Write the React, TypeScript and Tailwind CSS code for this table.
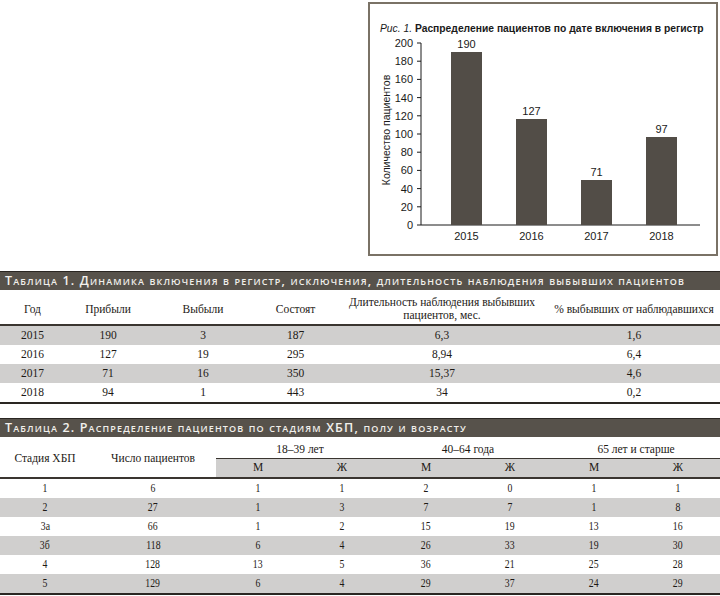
const bars = [
  { year: "2015", label: "190", x: 451, top: 52 },
  { year: "2016", label: "127", x: 516, top: 119 },
  { year: "2017", label: "71", x: 581, top: 180 },
  { year: "2018", label: "97", x: 646, top: 137 },
];

const ticks = [0, 20, 40, 60, 80, 100, 120, 140, 160, 180, 200];

const table1 = [
  ["2015", "190", "3", "187", "6,3", "1,6"],
  ["2016", "127", "19", "295", "8,94", "6,4"],
  ["2017", "71", "16", "350", "15,37", "4,6"],
  ["2018", "94", "1", "443", "34", "0,2"],
];

const table2 = [
  ["1", "6", "1", "1", "2", "0", "1", "1"],
  ["2", "27", "1", "3", "7", "7", "1", "8"],
  ["3а", "66", "1", "2", "15", "19", "13", "16"],
  ["3б", "118", "6", "4", "26", "33", "19", "30"],
  ["4", "128", "13", "5", "36", "21", "25", "28"],
  ["5", "129", "6", "4", "29", "37", "24", "29"],
];

const t1Widths = ["w-[65px]", "w-[86px]", "w-[104px]", "w-[81px]", "w-[212px]", "w-[172px]"];
const t2Widths = ["w-[90px]", "w-[126px]", "w-[84px]", "w-[84px]", "w-[84px]", "w-[84px]", "w-[84px]", "w-[84px]"];

function Chart() {
  const axisY = 225;
  return (
    <div className="ml-[368px] mt-[2px] h-[254px] w-[350px] border-2 border-[#7a7266]">
      <svg width="346" height="250" viewBox="370 4 346 250" className="block">
        <text x="380" y="32" fontSize="10.3" fill="#1a1a1a" fontFamily="'Liberation Sans', Arial, sans-serif">
          <tspan fontStyle="italic">Рис. 1.</tspan>
          <tspan fontWeight="bold"> Распределение пациентов по дате включения в регистр</tspan>
        </text>
        <text
          x="0"
          y="0"
          transform="translate(390 130) rotate(-90)"
          textAnchor="middle"
          fontSize="10.5"
          fill="#1a1a1a"
          fontFamily="'Liberation Sans', Arial, sans-serif"
        >
          Количество пациентов
        </text>
        <line x1="421" y1="43" x2="421" y2={axisY} stroke="#1a1a1a" strokeWidth="1" />
        <line x1="421" y1={axisY} x2="700" y2={axisY} stroke="#1a1a1a" strokeWidth="1" />
        {ticks.map((t) => {
          const y = axisY - t * 0.91;
          return (
            <g key={t}>
              <line x1="417" y1={y} x2="421" y2={y} stroke="#1a1a1a" strokeWidth="1" />
              <text
                x="413"
                y={y + 4}
                textAnchor="end"
                fontSize="11"
                fill="#1a1a1a"
                fontFamily="'Liberation Sans', Arial, sans-serif"
              >
                {t}
              </text>
            </g>
          );
        })}
        {bars.map((b) => (
          <g key={b.year}>
            <rect x={b.x} y={b.top} width="31" height={axisY - b.top} fill="#524d47" />
            <text
              x={b.x + 15.5}
              y={b.top - 4}
              textAnchor="middle"
              fontSize="11"
              fill="#1a1a1a"
              fontFamily="'Liberation Sans', Arial, sans-serif"
            >
              {b.label}
            </text>
            <text
              x={b.x + 15.5}
              y="240"
              textAnchor="middle"
              fontSize="11"
              fill="#1a1a1a"
              fontFamily="'Liberation Sans', Arial, sans-serif"
            >
              {b.year}
            </text>
          </g>
        ))}
      </svg>
    </div>
  );
}

function TitleBar({ children }: { children: string }) {
  return (
    <div className="border-t border-[#2a2622]">
      <div className="flex h-[18px] items-center bg-[#57524b] pl-[5px] font-['Open_Sans',sans-serif] text-[12.5px] font-semibold tracking-[1.15px] whitespace-nowrap text-[#f2f0ec] [font-variant:small-caps]">
        {children}
      </div>
    </div>
  );
}

export default function App() {
  return (
    <div className="h-[596px] w-[720px] overflow-hidden bg-white font-['Liberation_Serif',serif] text-[11px] text-[#1d1915]">
      <Chart />

      <div className="mt-[15px]">
        <TitleBar>Таблица 1. Динамика включения в регистр, исключения, длительность наблюдения выбывших пациентов</TitleBar>
        <div className="flex h-[36px] items-center border-b-2 border-[#3a3530] pt-[4px] text-[11.5px] leading-[13px]">
          <div className={`${t1Widths[0]} text-center`}>Год</div>
          <div className={`${t1Widths[1]} text-center`}>Прибыли</div>
          <div className={`${t1Widths[2]} text-center`}>Выбыли</div>
          <div className={`${t1Widths[3]} text-center`}>Состоят</div>
          <div className={`${t1Widths[4]} text-center`}>
            Длительность наблюдения выбывших
            <br />
            пациентов, мес.
          </div>
          <div className={`${t1Widths[5]} text-center`}>% выбывших от наблюдавшихся</div>
        </div>
        <div className="border-b-2 border-[#2a2622] text-[11.5px]">
          {table1.map((row, i) => (
            <div key={row[0]} className={`flex h-[19px] items-center ${i % 2 === 0 ? "bg-[#d0cfce]" : "bg-white"}`}>
              {row.map((cell, j) => (
                <div key={j} className={`${t1Widths[j]} text-center`}>
                  {cell}
                </div>
              ))}
            </div>
          ))}
        </div>
      </div>

      <div className="mt-[14px]">
        <TitleBar>Таблица 2. Распределение пациентов по стадиям ХБП, полу и возрасту</TitleBar>
        <div className="flex border-b-2 border-[#3a3530] text-[11.5px]">
          <div className={`${t2Widths[0]} flex items-center justify-center pt-[3px]`}>Стадия ХБП</div>
          <div className={`${t2Widths[1]} flex items-center justify-center pt-[3px]`}>Число пациентов</div>
          <div className="flex flex-1 flex-col">
            <div className="flex h-[21px] items-center pt-[4px]">
              <div className="w-[168px] text-center">18–39 лет</div>
              <div className="w-[168px] text-center">40–64 года</div>
              <div className="w-[168px] text-center">65 лет и старше</div>
            </div>
            <div className="flex h-[19px] items-center border-t border-[#3a3530] bg-[#d0cfce]">
              {["М", "Ж", "М", "Ж", "М", "Ж"].map((s, i) => (
                <div key={i} className="w-[84px] text-center">
                  {s}
                </div>
              ))}
            </div>
          </div>
        </div>
        <div className="border-b-2 border-[#2a2622] text-[11.5px]">
          {table2.map((row, i) => (
            <div key={row[0]} className={`flex h-[19px] items-center ${i % 2 === 1 ? "bg-[#d0cfce]" : "bg-white"}`}>
              {row.map((cell, j) => (
                <div key={j} className={`${t2Widths[j]} text-center`}>
                  <span className="inline-block scale-x-[0.85]">{cell}</span>
                </div>
              ))}
            </div>
          ))}
        </div>
      </div>
    </div>
  );
}
